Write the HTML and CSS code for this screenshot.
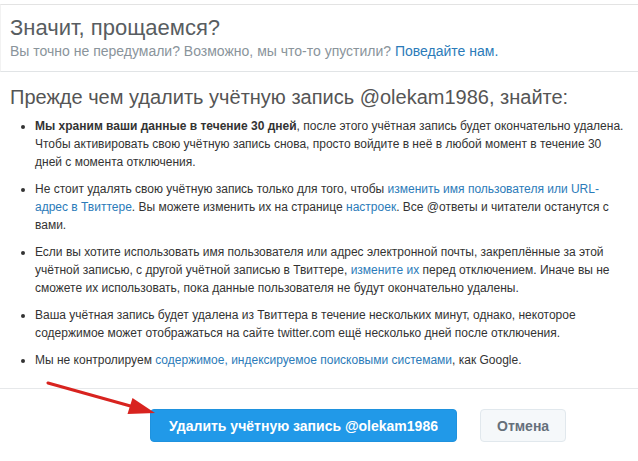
FILE: index.html
```html
<!DOCTYPE html>
<html lang="ru">
<head>
<meta charset="utf-8">
<title>Значит, прощаемся?</title>
<link rel="stylesheet" href="styles.css">
</head>
<body>
<div class="page">
  <header class="header">
    <h1 class="title">Значит, прощаемся?</h1>
    <p class="subtitle">Вы точно не передумали? Возможно, мы что-то упустили? <a href="#" class="link">Поведайте нам.</a></p>
  </header>
  <section class="content">
    <h2 class="heading">Прежде чем удалить учётную запись @olekam1986, знайте:</h2>
    <ul class="list">
      <li><b>Мы храним ваши данные в течение 30 дней</b>, после этого учётная запись будет окончательно удалена. Чтобы активировать свою учётную запись снова, просто войдите в неё в любой момент в течение 30 дней с момента отключения.</li>
      <li>Не стоит удалять свою учётную запись только для того, чтобы <a href="#" class="link">изменить имя пользователя или URL-адрес в Твиттере</a>. Вы можете изменить их на странице <a href="#" class="link">настроек</a>. Все @ответы и читатели останутся с вами.</li>
      <li>Если вы хотите использовать имя пользователя или адрес электронной почты, закреплённые за этой учётной записью, с другой учётной записью в Твиттере, <a href="#" class="link">измените их</a> перед отключением. Иначе вы не сможете их использовать, пока данные пользователя не будут окончательно удалены.</li>
      <li>Ваша учётная запись будет удалена из Твиттера в течение нескольких минут, однако, некоторое содержимое может отображаться на сайте twitter.com ещё несколько дней после отключения.</li>
      <li>Мы не контролируем <a href="#" class="link">содержимое, индексируемое поисковыми системами</a>, как Google.</li>
    </ul>
  </section>
  <footer class="actions">
    <button class="btn btn-primary">Удалить учётную запись @olekam1986</button>
    <button class="btn btn-default">Отмена</button>
  </footer>
  <svg class="arrow" width="638" height="461" viewBox="0 0 638 461" aria-hidden="true">
    <line x1="48" y1="383" x2="134" y2="407" stroke="#d8231f" stroke-width="3" stroke-linecap="round"/>
    <polygon points="155,413 127.5,414 132.5,398" fill="#d8231f"/>
  </svg>
</div>
</body>
</html>
```

FILE: styles.css
```css
html, body {
  margin: 0;
  padding: 0;
  background: #ffffff;
}

body {
  font-family: "Liberation Sans", Arial, sans-serif;
  color: #333333;
}

.page {
  position: relative;
  width: 638px;
  height: 461px;
  overflow: hidden;
}

.header {
  margin-top: 4px;
  border-top: 1px solid #e3e3e3;
  border-left: 1px solid #f2f2f2;
  border-bottom: 1px solid #e1e4e6;
  padding: 10px 0 11px 9px;
}

.title {
  margin: 0;
  font-size: 22px;
  line-height: 26px;
  font-weight: normal;
  color: #585d61;
}

.subtitle {
  margin: 1px 0 0;
  font-size: 14px;
  line-height: 18px;
  color: #8a949b;
}

.link {
  color: #2b7bb9;
  text-decoration: none;
}

.content {
  padding: 12px 0 0 10px;
}

.heading {
  margin: 0;
  font-size: 20px;
  line-height: 26px;
  font-weight: normal;
  color: #555555;
}

.list {
  margin: 7px 0 0;
  padding: 0 12px 0 25px;
  list-style: disc;
  font-size: 12px;
  line-height: 18px;
  color: #333333;
}

.list li {
  margin-bottom: 9px;
}

.list b {
  font-weight: bold;
}

.actions {
  position: absolute;
  left: 0;
  right: 0;
  top: 388px;
  border-top: 1px solid #e6e8ea;
  display: flex;
  gap: 23px;
  padding: 20px 0 0 150px;
}

.btn {
  font-family: "Liberation Sans", Arial, sans-serif;
  font-size: 14px;
  font-weight: bold;
  height: 33px;
  border-radius: 4px;
  padding: 0 16px;
  cursor: pointer;
}

.btn-primary {
  width: 307px;
  background: #2199e8;
  border: 1px solid #1f92de;
  color: #ffffff;
}

.btn-default {
  width: 86px;
  background: #f5f8fa;
  border: 1px solid #e1e8ed;
  color: #66707a;
}

.arrow {
  position: absolute;
  left: 0;
  top: 0;
  pointer-events: none;
}
```
